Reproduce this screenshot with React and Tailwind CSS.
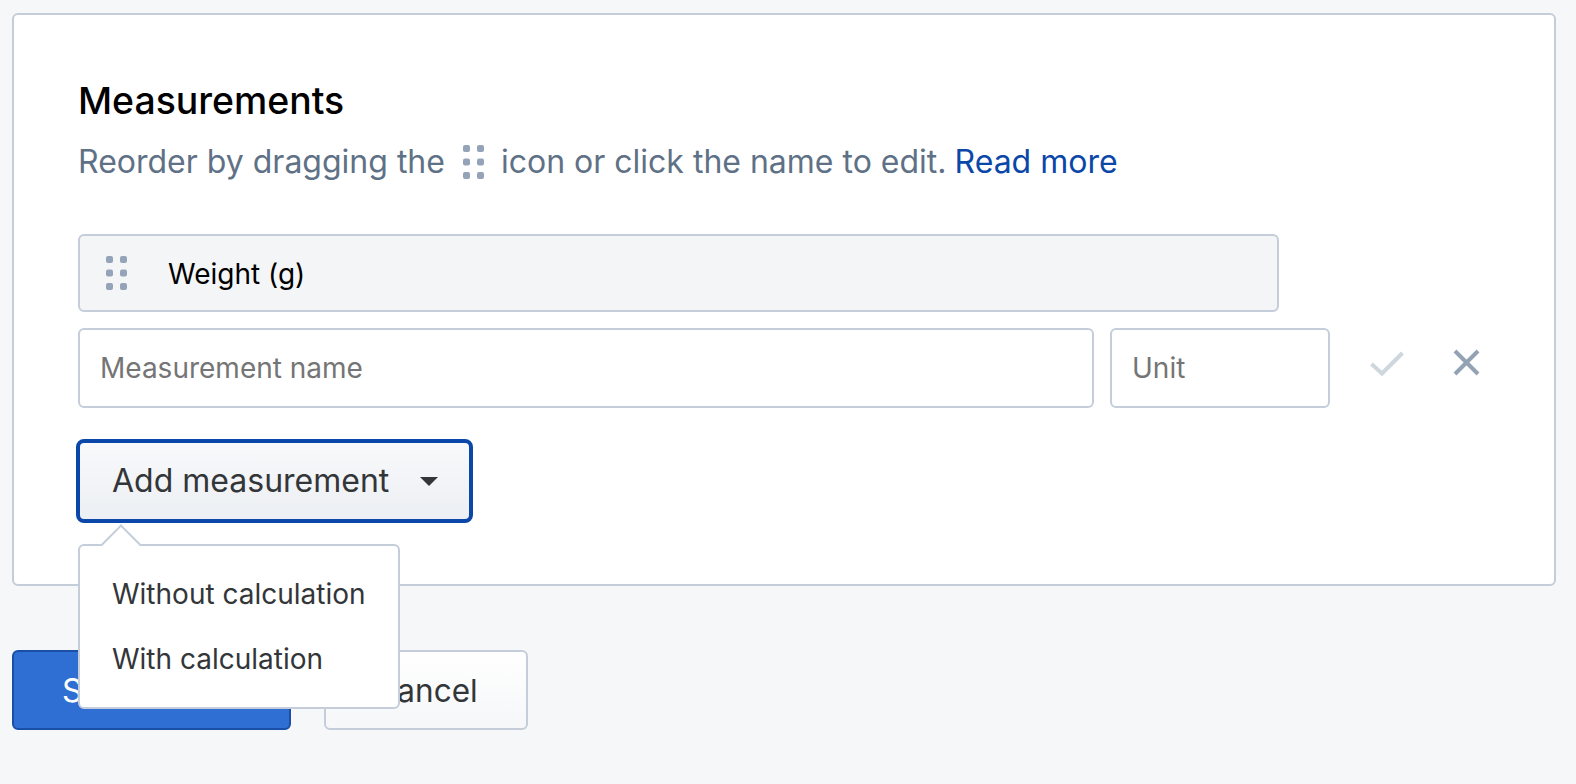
import React from 'react';

const Grip = ({ className }) => (
  <svg width="21" height="34" viewBox="0 0 21 34" className={className}>
    {[0, 13.5, 27].map((y) => (
      <g key={y} fill="#94a3b8">
        <rect x="0" y={y} width="7" height="7" rx="2" />
        <rect x="14" y={y} width="7" height="7" rx="2" />
      </g>
    ))}
  </svg>
);

const App = () => {
  return (
    <div className="h-screen overflow-hidden bg-[#f6f7f9] pl-3 pt-[13px] font-['Inter','Liberation_Sans',sans-serif]">
      {/* Card */}
      <div className="w-[1544px] h-[573px] bg-white border-2 border-[#c4cdd9] rounded-md pl-[64px] pt-[64px]">
        <h1 className="text-[37.4px] leading-[44px] font-medium text-black">Measurements</h1>
        <p className="mt-[17px] flex items-center text-[32px] leading-[44px] text-[#5f7186]">
          Reorder by dragging the
          <Grip className="ml-[18px] mr-[17px]" />
          icon or click the name to edit.
          <a className="ml-[8px] text-[#0b47a8]" href="#">Read more</a>
        </p>

        {/* Existing measurement */}
        <div className="mt-[50px] w-[1201px] h-[78px] flex items-center bg-[#f4f5f7] border-2 border-[#c4cdd9] rounded-md pl-[26px]">
          <Grip />
          <span className="ml-[41px] pt-[2px] text-[28px] text-black">Weight (g)</span>
        </div>

        {/* New measurement */}
        <div className="mt-[16px] flex items-center">
          <input
            placeholder="Measurement name"
            className="w-[1016px] h-[80px] bg-white border-2 border-[#c4cdd9] rounded-md px-5 text-[28px] placeholder:text-[#757575] outline-none"
          />
          <input
            placeholder="Unit"
            className="ml-[16px] w-[220px] h-[80px] bg-white border-2 border-[#c4cdd9] rounded-md px-5 text-[28px] placeholder:text-[#757575] outline-none"
          />
          <svg width="34" height="25" viewBox="0 0 34 25" className="ml-[40px] -mt-[10px]" fill="none">
            <path d="M1.5 13L12 22.5L32.5 2" stroke="#ced6de" strokeWidth="4" />
          </svg>
          <svg width="27" height="27" viewBox="0 0 27 27" className="ml-[49px] -mt-[12px]" fill="none">
            <path d="M2 2L25 25M25 2L2 25" stroke="#94a3b3" strokeWidth="4" />
          </svg>
        </div>

        {/* Add measurement dropdown */}
        <div className="relative mt-[31px] -ml-[2px] w-[397px]">
          <button className="w-[397px] h-[84px] flex items-center bg-linear-to-b from-[#f8f9fb] to-[#eceff3] border-4 border-[#0b47a8] rounded-lg pl-[32px] text-[32px] text-[#333639]">
            Add measurement
            <span className="ml-[31px] w-0 h-0 border-x-[9px] border-x-transparent border-t-[9px] border-t-[#333639]" />
          </button>
          <div className="absolute left-[2px] top-[105px] z-10 w-[322px] h-[165px] bg-white border-2 border-[#c4cdd9] rounded-md pt-[15px] pl-[32px] text-[28px] text-[#333639]">
            <div className="absolute left-[27px] top-[-16px] w-[28px] h-[28px] rotate-45 bg-white border-l-2 border-t-2 border-[#c4cdd9]" />
            <div className="relative h-[65px] flex items-center">Without calculation</div>
            <div className="relative h-[65px] flex items-center">With calculation</div>
          </div>
        </div>
      </div>

      {/* Footer buttons */}
      <div className="mt-[64px] flex gap-[33px]">
        <button className="w-[279px] h-[80px] bg-[#2f6fd3] border-2 border-[#1a4fa8] rounded-md pl-[48px] pt-[2px] text-left text-[32px] text-white">
          Save changes
        </button>
        <button className="w-[204px] h-[80px] bg-linear-to-b from-white to-[#f6f7f9] border-2 border-[#c4cdd9] rounded-md pt-[2px] text-[31.5px] text-[#333639]">
          Cancel
        </button>
      </div>
    </div>
  );
};

export default App;
